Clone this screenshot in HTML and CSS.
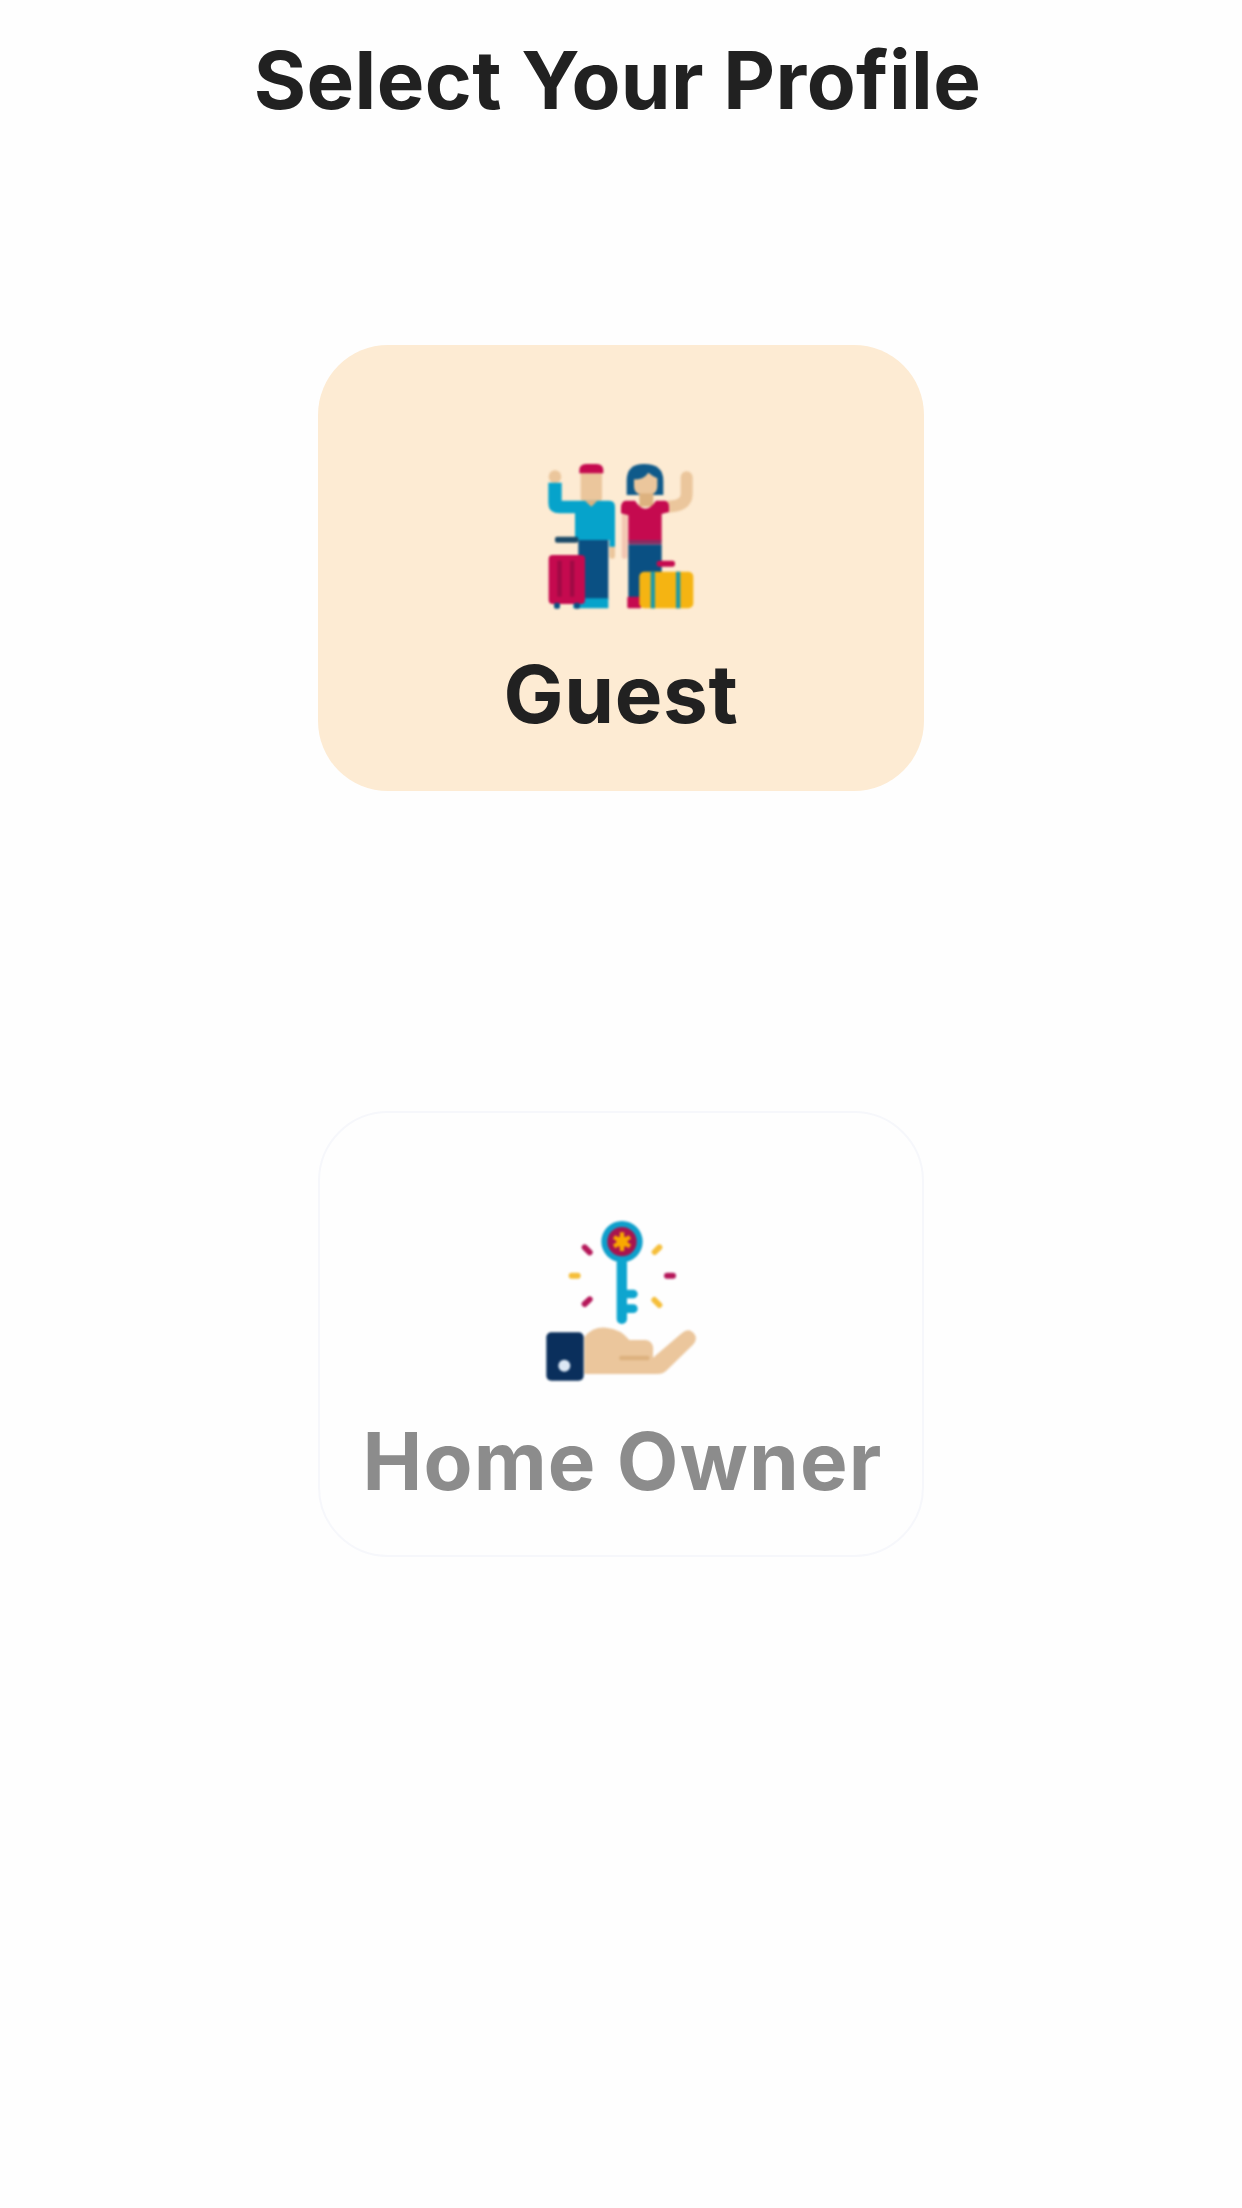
FILE: index.html
```html
<!DOCTYPE html>
<html lang="en">
<head>
<meta charset="utf-8">
<title>Select Your Profile</title>
<link rel="stylesheet" href="styles.css">
</head>
<body>
<main class="page">
  <h1 class="title">Select Your Profile</h1>
  <div class="cards">
    <section class="card card-active">
      <svg class="icon icon-guest" viewBox="0 0 600 510" width="200" height="170" aria-hidden="true">
        <!-- man -->
        <circle cx="105" cy="80" r="19" fill="#EBC69C"/>
        <rect x="182" y="58" width="64" height="96" rx="10" fill="#EBC69C"/>
        <path d="M178 70V62Q178 42 198 42H230Q250 42 250 62V70Z" fill="#C50A4F"/>
        <rect x="268" y="280" width="17" height="46" rx="8" fill="#EBC69C"/>
        <path d="M85 98H125V152H268Q285 152 285 170V290H268V270H165V190H118Q85 190 85 158Z" fill="#06A3CB"/>
        <path d="M195 152H232L214 170Z" fill="#DDB27F"/>
        <rect x="175" y="270" width="90" height="178" fill="#0A5083"/>
        <path d="M160 445H265V475H160Z" fill="#06A3CB"/>
        <rect x="105" y="260" width="70" height="18" rx="6" fill="#1B4A68"/>
        <rect x="86" y="315" width="109" height="147" rx="12" fill="#C50A4F"/>
        <rect x="112" y="332" width="13" height="108" fill="#A00A45"/>
        <rect x="150" y="332" width="13" height="108" fill="#A00A45"/>
        <rect x="102" y="458" width="18" height="18" rx="6" fill="#0A5083"/>
        <rect x="162" y="458" width="18" height="18" rx="6" fill="#0A5083"/>
        <!-- woman -->
        <path d="M320 135V92Q320 42 372 42Q430 42 430 92V135Z" fill="#0F5A8A"/>
        <path d="M342 88Q370 90 385 68Q400 80 412 85V108Q412 136 378 136Q342 136 342 108Z" fill="#EBC69C"/>
        <rect x="358" y="130" width="42" height="40" fill="#DDB27F"/>
        <rect x="305" y="190" width="18" height="136" rx="8" fill="#F3C7B2"/>
        <path d="M500 82V132Q500 170 440 170" fill="none" stroke="#EBC69C" stroke-width="36" stroke-linecap="round"/>
        <path d="M316 152H345Q376 200 408 152H435Q447 155 447 170V186L425 192V272H325V196L303 190V172Q303 155 316 152Z" fill="#C50A4F"/>
        <rect x="325" y="270" width="100" height="14" fill="#8A2C63"/>
        <rect x="325" y="284" width="100" height="160" fill="#0A5083"/>
        <rect x="322" y="440" width="42" height="35" rx="4" fill="#C50A4F"/>
        <rect x="410" y="332" width="55" height="18" rx="8" fill="#C50A4F"/>
        <rect x="358" y="365" width="162" height="110" rx="15" fill="#F5B412"/>
        <rect x="392" y="365" width="13" height="110" fill="#1E9AA8"/>
        <rect x="468" y="365" width="13" height="110" fill="#1E9AA8"/>
      </svg>
      <span class="label label-guest">Guest</span>
    </section>
    <section class="card card-idle">
      <svg class="icon icon-owner" viewBox="0 0 600 570" width="200" height="190" aria-hidden="true">
        <circle cx="303" cy="110" r="62" fill="#0E9FCB"/>
        <rect x="287" y="160" width="31" height="197" rx="15" fill="#0EA5CF"/>
        <rect x="300" y="254" width="50" height="26" rx="13" fill="#0EA5CF"/>
        <rect x="300" y="298" width="50" height="26" rx="13" fill="#0EA5CF"/>
        <circle cx="303" cy="110" r="44" fill="#A8144F"/>
        <path d="M303 82V138M279 96L327 124M279 124L327 96" stroke="#F9A800" stroke-width="13"/>
        <circle cx="303" cy="110" r="17" fill="#F9A800"/>
        <g stroke-width="18" stroke-linecap="round">
          <path d="M191 127L206 142M191 297L206 283M438 212H456" stroke="#B5185A"/>
          <path d="M415 127L401 141M400 285L415 300M152 212H170" stroke="#F5BE3A"/>
        </g>
        <path d="M190 396Q215 365 255 368Q300 372 325 405H375Q400 410 396 440V458L482 385Q505 365 522 390Q530 405 515 420L435 498Q425 507 410 507H190Z" fill="#EBC69C"/>
        <rect x="295" y="452" width="90" height="14" rx="5" fill="#DDB27F"/>
        <rect x="76" y="382" width="112" height="145" rx="15" fill="#0A2F5C"/>
        <circle cx="130" cy="482" r="18" fill="#DCE8F5"/>
      </svg>
      <span class="label label-owner">Home Owner</span>
    </section>
  </div>
</main>
</body>
</html>
```

FILE: styles.css
```css
* { box-sizing: border-box; }
html, body { margin: 0; padding: 0; background: #fff; }
.page {
  width: 1242px;
  height: 2208px;
  display: flex;
  flex-direction: column;
  align-items: center;
  background: #fefefe;
  font-family: Inter, "Noto Sans", sans-serif;
  overflow: hidden;
}
.title {
  margin: 0 7px 0 0;
  padding-top: 31px;
  height: 345px;
  font-size: 80px;
  line-height: 97px;
  font-weight: 700;
  color: #212121;
  letter-spacing: 0.4px;
  filter: blur(0.7px);
}
.cards {
  display: flex;
  flex-direction: column;
  gap: 320px;
}
.card {
  width: 606px;
  height: 446px;
  border-radius: 70px;
  display: flex;
  flex-direction: column;
  align-items: center;
}
.card-active { background: #fdebd3; color: #212121; }
.card-idle { background: #fefefe; border: 2px solid #f6f7fb; color: #8c8c8c; }
.icon { display: block; flex: none; filter: blur(1px); }
.icon-guest { margin-top: 105px; margin-left: -2px; }
.icon-owner { margin-top: 92px; margin-left: -1px; }
.label {
  font-size: 80px;
  line-height: 97px;
  font-weight: 700;
  white-space: nowrap;
  filter: blur(0.7px);
}
.label-guest { margin-top: 25px; letter-spacing: 0.7px; }
.label-owner { margin-top: 17px; margin-left: 3px; letter-spacing: 1.2px; }
```
